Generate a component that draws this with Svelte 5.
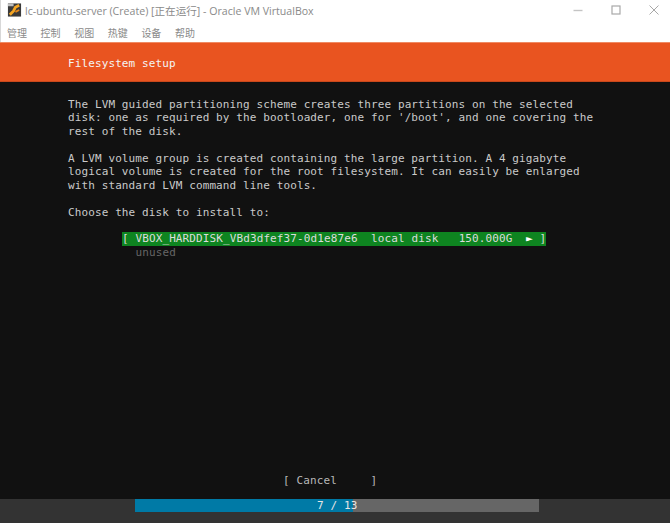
<script lang="ts">
    const menus = ['管理', '控制', '视图', '热键', '设备', '帮助'];
    const intro = `The LVM guided partitioning scheme creates three partitions on the selected
disk: one as required by the bootloader, one for '/boot', and one covering the
rest of the disk.

A LVM volume group is created containing the large partition. A 4 gigabyte
logical volume is created for the root filesystem. It can easily be enlarged
with standard LVM command line tools.

Choose the disk to install to:`;
    let step = 7;
    let total = 13;
</script>

<div class="window">
    <header class="titlebar">
        <svg class="appicon" width="16" height="16" viewBox="0 0 16 16">
            <rect x="1" y="1" width="14" height="14" fill="#3a3a3a" />
            <rect x="1" y="1" width="6" height="3" fill="#bdbdbd" />
            <path d="M3 13 L7 9 L9 5 L13 3" stroke="#f5a623" stroke-width="3" fill="none" />
            <path d="M9 10 L13 8" stroke="#e8891c" stroke-width="2" fill="none" />
        </svg>
        <span class="title">lc-ubuntu-server (Create) [正在运行] - Oracle VM VirtualBox</span>
        <div class="controls">
            <svg width="10" height="10" viewBox="0 0 10 10"><path d="M0.5 5.5 H9.5" stroke="#c4c4c4" stroke-width="1.4" /></svg>
            <svg width="10" height="10" viewBox="0 0 10 10"><rect x="1" y="1" width="8" height="8" fill="none" stroke="#a8a8a8" stroke-width="1.2" /></svg>
            <svg width="10" height="10" viewBox="0 0 10 10"><path d="M0.5 0.5 L9.5 9.5 M9.5 0.5 L0.5 9.5" stroke="#a8a8a8" stroke-width="1" /></svg>
        </div>
    </header>
    <nav class="menubar">
        {#each menus as menu}
            <span>{menu}</span>
        {/each}
    </nav>

    <div class="console">
        <div class="banner">Filesystem setup</div>
        <main class="body">
            <pre class="intro">{intro}</pre>
            <div class="disk">
                <pre class="selected">[ VBOX_HARDDISK_VBd3dfef37-0d1e87e6  local disk   150.000G  <span class="arrow">►</span> ]</pre>
                <pre class="unused">  unused</pre>
            </div>
            <pre class="cancel">[ Cancel     ]</pre>
        </main>
        <footer class="progress">
            <div class="track">
                <div class="fill" style="width: {(step / total) * 100}%"></div>
                <span class="count">{step} / {total}</span>
            </div>
        </footer>
    </div>
</div>

<style>
    :global(body) {
        background: #fff;
        overflow: hidden;
    }

    .window {
        width: 670px;
        height: 523px;
        display: flex;
        flex-direction: column;
        border-left: 1px solid #d8d8d8;
        box-sizing: border-box;
        font-family: 'Noto Sans CJK SC', 'Noto Sans', sans-serif;
    }

    .titlebar {
        height: 20px;
        display: flex;
        align-items: center;
        padding-left: 6px;
        color: #8a8a8a;
        font-size: 10.5px;
    }

    .appicon {
        margin-right: 3px;
        width: 15px;
    }

    .title {
        font-family: 'Open Sans', 'Noto Sans CJK SC', sans-serif;
        font-size: 10.6px;
    }

    .controls {
        margin-left: auto;
        display: flex;
        gap: 28px;
        padding-right: 11px;
    }

    .menubar {
        height: 22px;
        display: flex;
        gap: 13.6px;
        align-items: center;
        padding: 2px 0 0 6px;
        box-sizing: border-box;
        font-size: 10px;
        color: #8a8a8a;
    }

    .console {
        flex: 1;
        display: flex;
        flex-direction: column;
        margin-left: -1px;
        background: #111;
        min-height: 0;
    }

    pre {
        margin: 0;
        font: inherit;
        white-space: pre;
    }

    .banner {
        height: 40px;
        box-sizing: border-box;
        background: #e95420;
        border-bottom: 1px solid #c9481b;
        border-top: 1px solid #f08a63;
        padding: 1px 0 0 68px;
        line-height: 40px;
        color: #f4f4f4;
        font-family: 'DejaVu Sans Mono', monospace;
        font-size: 11px;
        letter-spacing: 0.11px;
    }

    .body {
        flex: 1;
        display: flex;
        flex-direction: column;
        padding: 16px 0 0 68px;
        color: #cacaca;
        font-family: 'DejaVu Sans Mono', monospace;
        font-size: 11px;
        letter-spacing: 0.11px;
        line-height: 13.45px;
    }

    .disk {
        margin: 13px 0 0 54px;
    }

    .selected {
        width: 424px;
        background: #0e8420;
        color: #dcdcdc;
    }

    .arrow {
        color: #fff;
    }

    .unused {
        color: #666;
    }

    .cancel {
        margin: auto 0 12px 215px;
        color: #b8b8b8;
    }

    .progress {
        height: 24px;
        background: #333;
        padding: 0 131px 0 135px;
    }

    .track {
        position: relative;
        height: 13px;
        background: #666;
    }

    .fill {
        height: 100%;
        background: #007aa6;
    }

    .count {
        position: absolute;
        left: 182px;
        top: 0;
        color: #e6e6e6;
        font-family: 'DejaVu Sans Mono', monospace;
        font-size: 11px;
        letter-spacing: 0.11px;
        line-height: 13px;
        white-space: pre;
    }
</style>
